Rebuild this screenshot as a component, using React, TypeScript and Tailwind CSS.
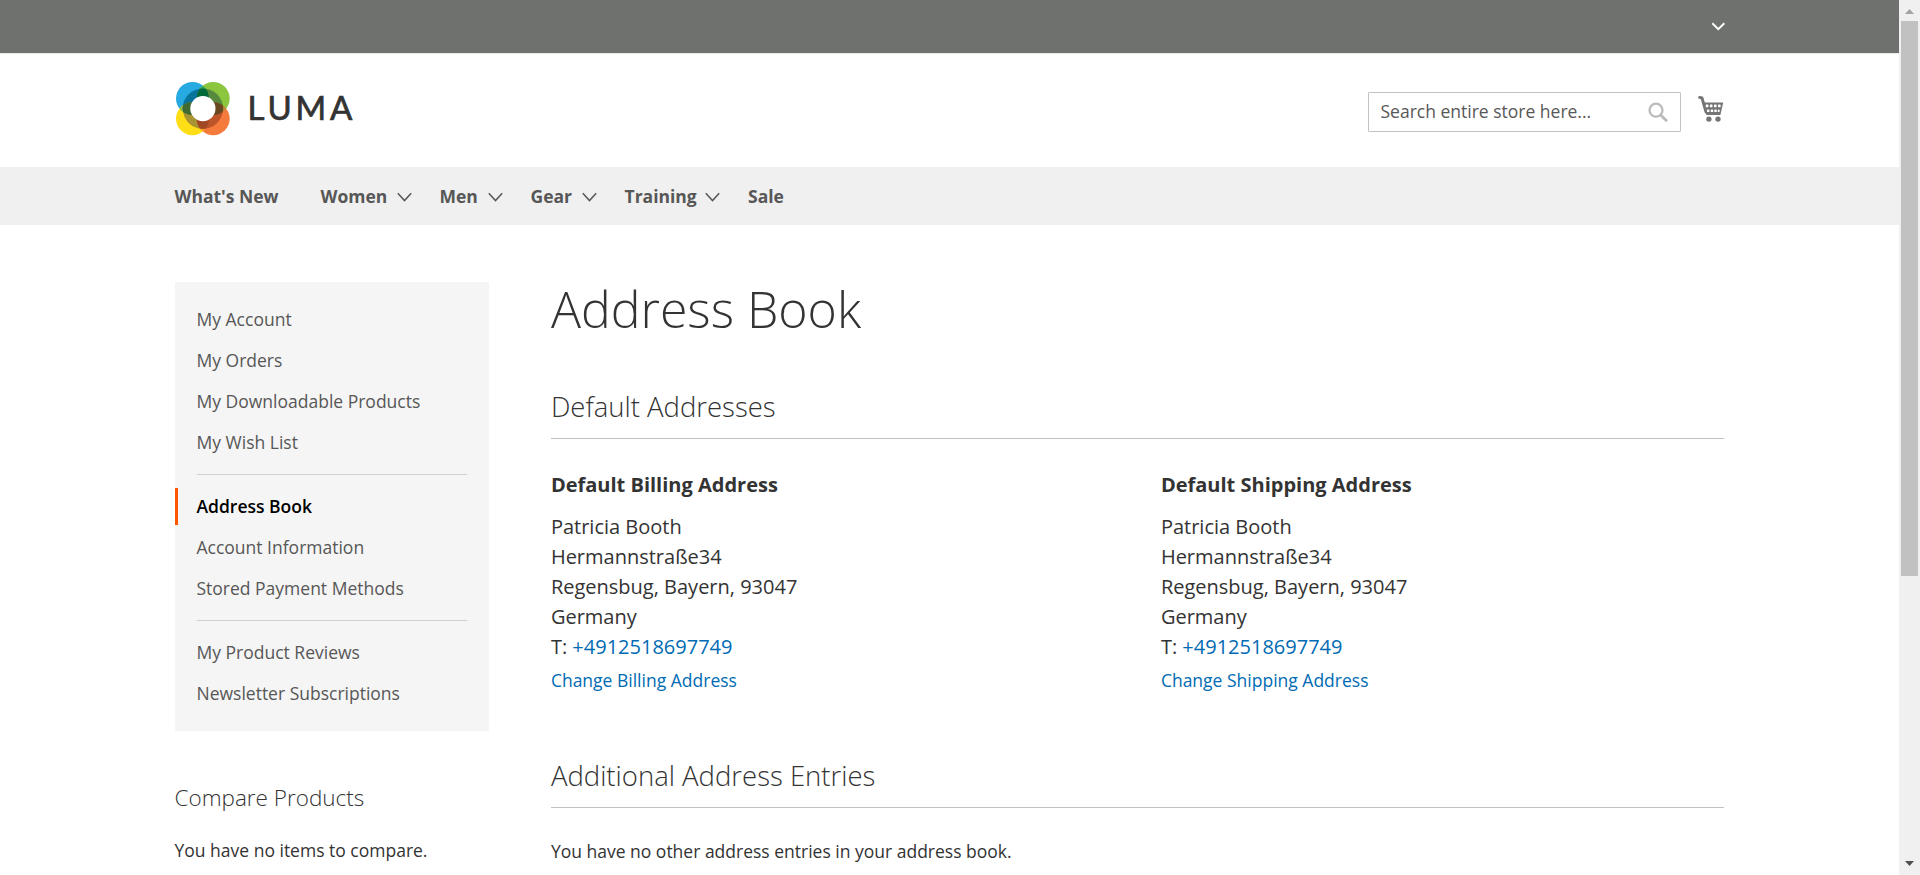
import React from "react";

const navItems = [
  { label: "What's New", width: "w-[146px]", menu: false },
  { label: "Women", width: "w-[119px]", menu: true },
  { label: "Men", width: "w-[91px]", menu: true },
  { label: "Gear", width: "w-[94px]", menu: true },
  { label: "Training", width: "w-[123.5px]", menu: true },
  { label: "Sale", width: "w-auto", menu: false },
];

const accountGroups = [
  ["My Account", "My Orders", "My Downloadable Products", "My Wish List"],
  ["Address Book", "Account Information", "Stored Payment Methods"],
  ["My Product Reviews", "Newsletter Subscriptions"],
];

const circles = {
  tl: { cx: 17.5, cy: 17.5, fill: "#27a9e1", tint: "#0a739c" },
  tr: { cx: 38.2, cy: 17.5, fill: "#8cc63f", tint: "#57893f" },
  bl: { cx: 17.5, cy: 37.7, fill: "#ffde17", tint: "#a99433" },
  br: { cx: 38.2, cy: 37.7, fill: "#f47b3c", tint: "#bd552b" },
};

type Corner = keyof typeof circles;

const overlaps: { a: Corner; b: Corner; light: string; dark: string }[] = [
  { a: "tl", b: "tr", light: "#3aa655", dark: "#006b38" },
  { a: "tl", b: "bl", light: "#8dbb4a", dark: "#3f6b33" },
  { a: "tr", b: "br", light: "#b98b3a", dark: "#67481f" },
  { a: "bl", b: "br", light: "#f9a21f", dark: "#a04723" },
];

function Logo() {
  const corners = Object.keys(circles) as Corner[];
  return (
    <a href="#" className="flex items-center">
      <svg width="56" height="55" viewBox="0 0 56 55">
        <defs>
          {corners.map((k) => (
            <clipPath key={k} id={k}><circle cx={circles[k].cx} cy={circles[k].cy} r="16.5" /></clipPath>
          ))}
          <clipPath id="ring"><circle cx="27.9" cy="27.6" r="20.2" /></clipPath>
        </defs>
        {corners.map((k) => (
          <circle key={k} cx={circles[k].cx} cy={circles[k].cy} r="16.5" fill={circles[k].fill} />
        ))}
        {overlaps.map((o) => (
          <g key={o.light} clipPath={`url(#${o.a})`}>
            <circle cx={circles[o.b].cx} cy={circles[o.b].cy} r="16.5" fill={o.light} />
          </g>
        ))}
        {corners.map((k) => (
          <circle key={k} cx="27.9" cy="27.6" r="20.2" fill={circles[k].tint} clipPath={`url(#${k})`} />
        ))}
        <g clipPath="url(#ring)">
          {overlaps.map((o) => (
            <g key={o.dark} clipPath={`url(#${o.a})`}>
              <circle cx={circles[o.b].cx} cy={circles[o.b].cy} r="16.5" fill={o.dark} />
            </g>
          ))}
        </g>
        <circle cx="27.9" cy="27.6" r="12.6" fill="#fff" />
      </svg>
      <span className="mb-[3px] ml-[17px] font-[Lato,sans-serif] text-[33px] leading-[40px] tracking-[3.8px] text-[#333] [-webkit-text-stroke:0.7px_#333]">LUMA</span>
    </a>
  );
}

function CartIcon() {
  return (
    <svg width="28" height="28" viewBox="0 0 28 28" fill="#757575">
      <path d="M2.6 2.4 L5 3 L9 17" fill="none" stroke="#757575" strokeWidth="2.9" strokeLinecap="round" strokeLinejoin="round" />
      <path d="M5.8 7.4 H26.2 L23.4 20 H9.4 Z" />
      <g fill="#fff">
        <rect x="8.8" y="9.6" width="2.6" height="2.6" rx=".5" />
        <rect x="12.9" y="9.6" width="2.6" height="2.6" rx=".5" />
        <rect x="17" y="9.6" width="2.6" height="2.6" rx=".5" />
        <rect x="21" y="9.6" width="2.6" height="2.6" rx=".5" />
        <rect x="10" y="14.4" width="2.4" height="2.5" rx=".5" />
        <rect x="13.7" y="14.4" width="2.5" height="2.5" rx=".5" />
        <rect x="17.3" y="14.4" width="2.5" height="2.5" rx=".5" />
        <rect x="20.8" y="14.4" width="1.8" height="2.5" rx=".5" />
      </g>
      <circle cx="11.9" cy="24.1" r="2.7" />
      <circle cx="21" cy="24.1" r="2.7" />
    </svg>
  );
}

function AddressCard({ kind }: { kind: string }) {
  return (
    <div>
      <h3 className="text-[20px] leading-[22px] font-bold">Default {kind} Address</h3>
      <address className="mt-4 text-[20px] leading-[30px] not-italic">
        Patricia Booth<br />
        Hermannstraße34<br />
        Regensbug, Bayern, 93047<br />
        Germany<br />
        T: <a href="#" className="text-[#006bb4]">+4912518697749</a>
      </address>
      <a href="#" className="mt-1.5 block leading-[25px] text-[#006bb4]">Change {kind} Address</a>
    </div>
  );
}

function Scrollbar() {
  return (
    <div className="flex h-full w-[21px] shrink-0 flex-col items-center bg-[#f0f0f0]">
      <svg width="21" height="21" viewBox="0 0 21 21"><path d="M6 14 L10.5 9 L15 14 Z" fill="#a3a3a3" /></svg>
      <div className="h-[555px] w-[17px] bg-[#c1c1c1]" />
      <div className="grow" />
      <svg width="21" height="21" viewBox="0 0 21 21"><path d="M6 7 L10.5 12 L15 7 Z" fill="#505050" /></svg>
    </div>
  );
}

export default function App() {
  return (
    <div className="flex h-[875px] w-[1920px] overflow-hidden bg-white font-['Open_Sans',sans-serif] text-[17.5px] text-[#333]">
      <div className="flex min-w-0 grow flex-col">
        <div className="h-[54px] shrink-0 border-b border-[#e8e8e8] bg-[#6e716e]">
          <div className="mx-auto flex h-[53px] w-[1550px] items-center justify-end">
            <svg width="14" height="9" viewBox="0 0 14 9" fill="none" stroke="#fff" strokeWidth="2"><path d="M1.3 1.3 L7.3 7.2 L13.3 1.3" /></svg>
          </div>
        </div>

        <header className="mx-auto flex h-[113px] w-[1550px] shrink-0 items-start justify-between">
          <div className="pt-[27px]"><Logo /></div>
          <div className="flex pt-[38px]">
            <div className="flex h-10 w-[313px] items-center justify-between rounded-[1px] border border-[#c2c2c2] px-3">
              <span className="pb-0.5 text-[#575757]">Search entire store here...</span>
              <svg width="20" height="20" viewBox="0 0 20 20" fill="none" stroke="#bababa" strokeWidth="2.2"><circle cx="8" cy="8.2" r="6.5" /><path d="M12.7 13 L19 19.2" strokeWidth="2.8" /></svg>
            </div>
            <div className="mt-[3px] ml-4"><CartIcon /></div>
          </div>
        </header>

        <nav className="h-[58px] shrink-0 bg-[#f0f0f0]">
          <ul className="mx-auto flex w-[1550px] leading-[58px] font-bold text-[#575757]">
            {navItems.map((item) => (
              <li key={item.label} className={`${item.width} flex items-center justify-between pr-7 whitespace-nowrap`}>
                {item.label}
                {item.menu && (
                  <svg className="mt-px" width="15" height="10" viewBox="0 0 15 10" fill="none" stroke="#575757" strokeWidth="1.5"><path d="M.8 1.2 L7.5 8.6 L14.2 1.2" /></svg>
                )}
              </li>
            ))}
          </ul>
        </nav>

        <div className="mx-auto flex w-[1550px] gap-[62.4px] pt-[57px]">
          <aside className="w-[314px] shrink-0">
            <div className="h-[449px] bg-[#f5f5f5] pt-[19px]">
              {accountGroups.map((group, g) => (
                <React.Fragment key={g}>
                  {g > 0 && <hr className="mx-[22px] my-[13px] border-[#d1d1d1]" />}
                  <ul className="flex flex-col gap-1">
                    {group.map((label) => (
                      <li
                        key={label}
                        className={
                          label === "Address Book"
                            ? "h-[37px] border-l-3 border-[#ff5501] pt-1.5 pl-[19px] leading-[25px] font-semibold text-black"
                            : "h-[37px] pt-1.5 pl-[22px] leading-[25px] text-[#575757]"
                        }
                      >
                        {label}
                      </li>
                    ))}
                  </ul>
                </React.Fragment>
              ))}
            </div>
            <h2 className="mt-[54px] text-[22.5px] leading-[25px] font-light">Compare Products</h2>
            <p className="mt-7 leading-[25px]">You have no items to compare.</p>
          </aside>

          <main className="w-[1173.6px]">
            <h1 className="text-[50px] leading-[54px] font-light">Address Book</h1>
            <h2 className="mt-[55px] border-b border-[#c1c1c1] pb-4 text-[27.5px] leading-[31px] font-light">Default Addresses</h2>
            <div className="mt-[35px] grid grid-cols-[610px_1fr]">
              <AddressCard kind="Billing" />
              <AddressCard kind="Shipping" />
            </div>
            <h2 className="mt-[67px] border-b border-[#c1c1c1] pb-4 text-[27.5px] leading-[31px] font-light">Additional Address Entries</h2>
            <p className="mt-[31px] leading-[25px]">You have no other address entries in your address book.</p>
          </main>
        </div>
      </div>
      <Scrollbar />
    </div>
  );
}
